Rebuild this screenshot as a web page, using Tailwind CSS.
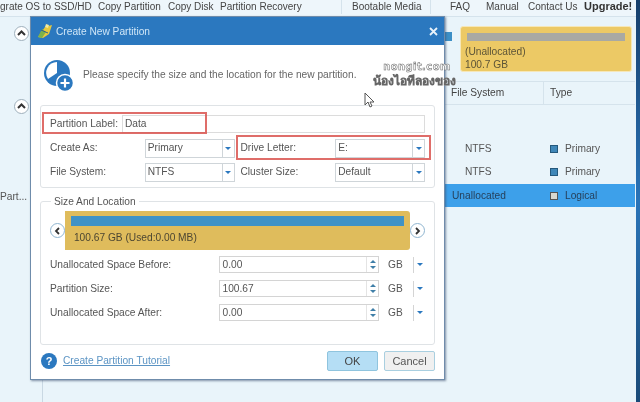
<!DOCTYPE html>
<html lang="en">
<head>
  <meta charset="UTF-8" />
  <title>Create New Partition</title>
  <script src="https://cdn.jsdelivr.net/npm/@tailwindcss/browser@4"></script>
</head>
<body class="m-0 overflow-hidden bg-[#e9f4fa]">
<div class="relative w-[640px] h-[402px] overflow-hidden bg-[#e9f4fa] font-['Liberation_Sans',sans-serif] text-[10.2px] text-[#555] blur-[0.35px]">

  <!-- App behind the dialog -->
  <div class="flex h-[17px] pb-[4px] items-center bg-[#eef6fb] border-b border-[#d5e3ec] whitespace-nowrap text-[#444] text-[10px]">
    <span class="w-[98px]">grate OS to SSD/HD</span>
    <span class="w-[70px]">Copy Partition</span>
    <span class="w-[52px]">Copy Disk</span>
    <span class="w-[121px]">Partition Recovery</span>
    <span class="w-[89px] border-l border-[#d5e3ec] pl-[10px]">Bootable Media</span>
    <span class="border-l border-[#d5e3ec] pl-[19px] w-[56px]">FAQ</span>
    <span class="w-[42px]">Manual</span>
    <span class="w-[56px]">Contact Us</span>
    <span class="font-bold text-[#333] text-[11px]">Upgrade!</span>
  </div>

  <div class="flex h-[385px]">
    <!-- Left side panel -->
    <div class="w-[43px] h-full border-r border-[#c9d8e3] relative">
      <div class="absolute left-[14px] top-[9px] w-[15px] h-[15px] rounded-full bg-white border border-[#9fb0bc] flex items-center justify-center">
        <svg width="9" height="7" viewBox="0 0 9 7"><path d="M1 5l3.500-3.500L8 5" fill="none" stroke="#333" stroke-width="2"/></svg>
      </div>
      <div class="absolute left-[14px] top-[82px] w-[15px] h-[15px] rounded-full bg-white border border-[#9fb0bc] flex items-center justify-center">
        <svg width="9" height="7" viewBox="0 0 9 7"><path d="M1 5l3.500-3.500L8 5" fill="none" stroke="#333" stroke-width="2"/></svg>
      </div>
      <span class="absolute left-0 top-[172px]">Part...</span>
    </div>

    <!-- Right side panel -->
    <div class="ml-[402px] w-[190px] h-full relative">
      <div class="flex h-[64px] pt-[9px] pl-[15px]">
        <div class="w-[172px] h-[46px] shrink-0 rounded-[3px] bg-[#ecc965] border border-[#f6e7b8] px-[4px] pt-[6px] text-[#5c5437] leading-[13px]">
          <div class="h-[8px] mx-[2px] mb-[4px] bg-[#a9a9a3]"></div>
          <div>(Unallocated)</div>
          <div>100.7 GB</div>
        </div>
      </div>
      <div class="absolute left-0 top-[15px] w-[7px] h-[9px] bg-[#3c8fc6]"></div>
      <div class="h-[24px] border-y border-[#d5e3ec] flex items-center text-[#444]">
        <span class="ml-[6px] w-[93px] border-r border-[#d5e3ec] leading-[22px]">File System</span>
        <span class="ml-[6px]">Type</span>
      </div>
      <div class="h-[32px]"></div>
      <div class="h-[23px] flex items-center pl-[20px]">
        <span class="w-[85px]">NTFS</span>
        <span class="w-[8px] h-[8px] bg-[#3f87b8] border border-[#24587c] mr-[7px]"></span>Primary
      </div>
      <div class="h-[24px] flex items-center pl-[20px]">
        <span class="w-[85px]">NTFS</span>
        <span class="w-[8px] h-[8px] bg-[#3f87b8] border border-[#24587c] mr-[7px]"></span>Primary
      </div>
      <div class="h-[23px] flex items-center bg-[#3da0ea] pl-[7px] text-[#26415c]">
        <span class="w-[98px]">Unallocated</span>
        <span class="w-[8px] h-[8px] bg-[#d8d8d0] border border-[#555] mr-[7px]"></span>Logical
      </div>
    </div>
  </div>
  <div class="absolute right-0 top-0 w-[4px] h-full bg-gradient-to-b from-[#163f6c] via-[#2a74b8] to-[#1a4a78]"></div>

  <!-- Dialog -->
  <div class="absolute left-[30px] top-[16px] w-[415px] h-[364px] bg-white border border-[#6f8cab] shadow-[1px_1px_2px_rgba(60,80,110,0.6)] flex flex-col">
    <div class="h-[28px] shrink-0 bg-[#2b78bf] flex items-center pl-[5px] pr-[6px] text-white/85">
      <svg width="18" height="18" viewBox="0 0 18 18">
        <path d="M2 15L9 5l7-2-3 9-6 4z" fill="#e8c93e"/>
        <path d="M2 15l4-8 4 3-4 6z" fill="#7db24a"/>
        <path d="M10 2l3 1-1 3-3-1z" fill="#f4e9a0"/>
        <path d="M5 8l7 3" stroke="#2f5f8f" stroke-width="1"/>
      </svg>
      <span class="ml-[2px] mt-[1px] flex-1 text-[#cfe6f7]">Create New Partition</span>
      <svg width="9" height="9" viewBox="0 0 9 9"><path d="M1 1l7 7M8 1l-7 7" stroke="#e8f2fa" stroke-width="1.800"/></svg>
    </div>

    <div class="px-[9px] flex-1 flex flex-col">
      <!-- Heading -->
      <div class="flex items-center h-[60px] pl-[3px]">
        <svg width="31" height="33" viewBox="0 0 31 33">
          <circle cx="14" cy="14" r="13" fill="#2b78bf"/>
          <path d="M14 3a11 11 0 0 0-9 17l9-6z" fill="#fff"/>
          <circle cx="22" cy="24" r="8.500" fill="#2b78bf" stroke="#fff" stroke-width="1.500"/>
          <path d="M22 19.500v9M17.500 24h9" stroke="#fff" stroke-width="2.200"/>
        </svg>
        <span class="ml-[9px] text-[#666]">Please specify the size and the location for the new partition.</span>
      </div>

      <!-- Partition options -->
      <div class="h-[83px] border border-[#dfe3e6] rounded-[3px] px-[9px] pt-[8px] text-[#555]">
        <div class="flex items-center h-[19px]">
          <span class="w-[72px] whitespace-nowrap">Partition Label:</span>
          <div class="flex-1 h-[18px] border border-[#dcdcdc] pl-[2px] leading-[16px]">Data</div>
        </div>
        <div class="flex items-center h-[20px] mt-[5px]">
          <span class="w-[95px]">Create As:</span>
          <div class="w-[90px] h-[19px] border border-[#cfd5d9] flex items-center pl-[2px]">
            <span class="flex-1">Primary</span>
            <span class="w-[12px] h-full border-l border-[#cfd5d9] flex items-center justify-center"><span class="border-x-[3px] border-t-[3px] border-x-transparent border-t-[#2b78bf]"></span></span>
          </div>
          <span class="ml-[6px] w-[95px]">Drive Letter:</span>
          <div class="w-[90px] h-[19px] border border-[#cfd5d9] flex items-center pl-[2px]">
            <span class="flex-1">E:</span>
            <span class="w-[12px] h-full border-l border-[#cfd5d9] flex items-center justify-center"><span class="border-x-[3px] border-t-[3px] border-x-transparent border-t-[#2b78bf]"></span></span>
          </div>
        </div>
        <div class="flex items-center h-[20px] mt-[4px]">
          <span class="w-[95px]">File System:</span>
          <div class="w-[90px] h-[19px] border border-[#cfd5d9] flex items-center pl-[2px]">
            <span class="flex-1">NTFS</span>
            <span class="w-[12px] h-full border-l border-[#cfd5d9] flex items-center justify-center"><span class="border-x-[3px] border-t-[3px] border-x-transparent border-t-[#2b78bf]"></span></span>
          </div>
          <span class="ml-[6px] w-[95px]">Cluster Size:</span>
          <div class="w-[90px] h-[19px] border border-[#cfd5d9] flex items-center pl-[2px]">
            <span class="flex-1">Default</span>
            <span class="w-[12px] h-full border-l border-[#cfd5d9] flex items-center justify-center"><span class="border-x-[3px] border-t-[3px] border-x-transparent border-t-[#2b78bf]"></span></span>
          </div>
        </div>
      </div>

      <!-- Size and location -->
      <div class="relative mt-[13px] h-[144px] border border-[#dfe3e6] rounded-[3px] px-[9px]">
        <span class="absolute left-[10px] top-[-8px] bg-white px-[3px] text-[#555]">Size And Location</span>
        <div class="flex items-center mt-[9px]">
          <div class="w-[15px] h-[15px] rounded-full bg-white border border-[#8fb5d0] flex items-center justify-center">
            <svg width="6" height="8" viewBox="0 0 6 8"><path d="M5 1L2 4l3 3" fill="none" stroke="#333" stroke-width="1.800"/></svg>
          </div>
          <div class="w-[347px] h-[39px] bg-[#dfbc5c] rounded-r-[3px] px-[6px] pt-[5px] text-[#4c4632]">
            <div class="h-[10px] bg-[#3f92c6]"></div>
            <div class="mt-[5px] ml-[3px] leading-[14px]">100.67 GB (Used:0.00 MB)</div>
          </div>
          <div class="w-[15px] h-[15px] rounded-full bg-white border border-[#8fb5d0] flex items-center justify-center">
            <svg width="6" height="8" viewBox="0 0 6 8"><path d="M1 1l3 3-3 3" fill="none" stroke="#333" stroke-width="1.800"/></svg>
          </div>
        </div>
        <div class="flex items-center h-[17px] mt-[6px]">
          <span class="w-[169px]">Unallocated Space Before:</span>
          <div class="w-[161px] h-[17px] border border-[#d4d4d4] flex items-center pl-[3px]"><span class="flex-1">0.00</span>
            <span class="w-[12px] h-full border-l border-[#e4e4e4] flex flex-col items-center justify-center gap-[3px]"><span class="border-x-[3px] border-b-[3px] border-x-transparent border-b-[#3f7fa8]"></span><span class="border-x-[3px] border-t-[3px] border-x-transparent border-t-[#3f7fa8]"></span></span>
          </div>
          <span class="ml-[9px] w-[25px]">GB</span>
          <span class="h-[16px] w-[12px] border-l border-[#d4d4d4] flex items-center justify-center"><span class="border-x-[3px] border-t-[3px] border-x-transparent border-t-[#2b78bf]"></span></span>
        </div>
        <div class="flex items-center h-[17px] mt-[7px]">
          <span class="w-[169px]">Partition Size:</span>
          <div class="w-[161px] h-[17px] border border-[#d4d4d4] flex items-center pl-[3px]"><span class="flex-1">100.67</span>
            <span class="w-[12px] h-full border-l border-[#e4e4e4] flex flex-col items-center justify-center gap-[3px]"><span class="border-x-[3px] border-b-[3px] border-x-transparent border-b-[#3f7fa8]"></span><span class="border-x-[3px] border-t-[3px] border-x-transparent border-t-[#3f7fa8]"></span></span>
          </div>
          <span class="ml-[9px] w-[25px]">GB</span>
          <span class="h-[16px] w-[12px] border-l border-[#d4d4d4] flex items-center justify-center"><span class="border-x-[3px] border-t-[3px] border-x-transparent border-t-[#2b78bf]"></span></span>
        </div>
        <div class="flex items-center h-[17px] mt-[7px]">
          <span class="w-[169px]">Unallocated Space After:</span>
          <div class="w-[161px] h-[17px] border border-[#d4d4d4] flex items-center pl-[3px]"><span class="flex-1">0.00</span>
            <span class="w-[12px] h-full border-l border-[#e4e4e4] flex flex-col items-center justify-center gap-[3px]"><span class="border-x-[3px] border-b-[3px] border-x-transparent border-b-[#3f7fa8]"></span><span class="border-x-[3px] border-t-[3px] border-x-transparent border-t-[#3f7fa8]"></span></span>
          </div>
          <span class="ml-[9px] w-[25px]">GB</span>
          <span class="h-[16px] w-[12px] border-l border-[#d4d4d4] flex items-center justify-center"><span class="border-x-[3px] border-t-[3px] border-x-transparent border-t-[#2b78bf]"></span></span>
        </div>
      </div>

      <!-- Footer -->
      <div class="flex items-center mt-[6px]">
        <span class="ml-[1px] w-[16px] h-[16px] rounded-full bg-[#2b78bf] text-white font-bold text-center leading-[16px] text-[11px]">?</span>
        <a class="ml-[6px] flex-1 text-[#5b94c4] underline">Create Partition Tutorial</a>
        <button class="w-[51px] h-[20px] bg-[#b5def5] border border-[#8fc4de] rounded-[2px] text-[#444] text-[11px]">OK</button>
        <button class="ml-[6px] w-[51px] h-[20px] bg-[#f0f0f0] border border-[#a9cfe0] rounded-[2px] text-[#555] text-[11px]">Cancel</button>
      </div>
    </div>
  </div>

  <!-- Red annotation boxes -->
  <div class="absolute left-[42px] top-[112px] w-[165px] h-[22px] border-2 border-[#d9534f]/85"></div>
  <div class="absolute left-[236px] top-[135px] w-[195px] h-[25px] border-2 border-[#d9534f]/85"></div>

  <!-- Watermark and mouse cursor -->
  <div class="absolute left-[360px] top-[60px] w-[108px] text-center font-['DejaVu_Sans',sans-serif] font-bold text-white [-webkit-text-stroke:0.5px_#666] leading-[14px] whitespace-nowrap">
    <div class="ml-[6px] text-[10px] tracking-[0.4px]">nongit.com</div>
    <div class="text-[12px]">น้องไอทีลองของ</div>
  </div>
  <svg class="absolute left-[364px] top-[92px]" width="12" height="16" viewBox="0 0 12 16"><path d="M1 1v12l3-3 2 5 2-1-2-4h4z" fill="#fff" stroke="#555" stroke-width="1"/></svg>
</div>
</body>
</html>
